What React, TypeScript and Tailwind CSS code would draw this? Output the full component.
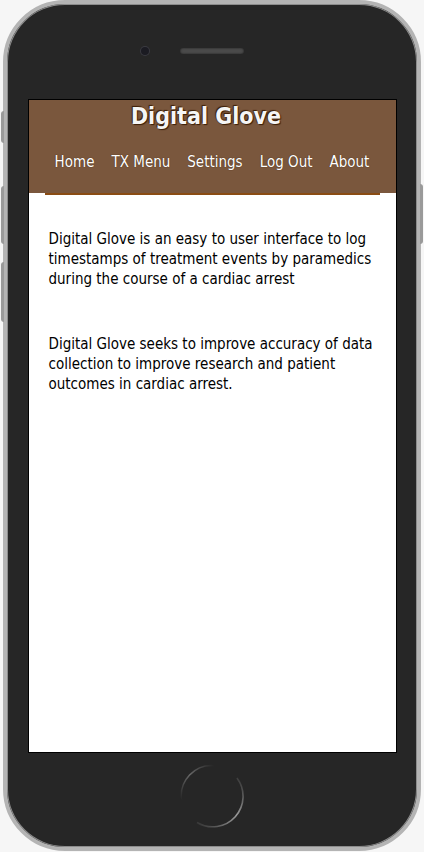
const font = { fontFamily: '"DejaVu Sans Condensed", "DejaVu Sans", Verdana, sans-serif' };

function HomeButton() {
  return (
    <svg width="64" height="64" viewBox="0 0 64 64" className="mt-[11px]">
      <defs>
        <linearGradient id="arcA" x1="0" y1="1" x2="1" y2="0">
          <stop offset="0" stopColor="#262626" />
          <stop offset="0.5" stopColor="#686868" />
          <stop offset="1" stopColor="#262626" />
        </linearGradient>
        <linearGradient id="arcB" x1="1" y1="0" x2="0" y2="1">
          <stop offset="0" stopColor="#303030" />
          <stop offset="0.45" stopColor="#9a9a9a" />
          <stop offset="1" stopColor="#303030" />
        </linearGradient>
      </defs>
      {/* upper-left arc */}
      <path d="M 1.5 36 A 30.5 30.5 0 0 1 34 1.6" fill="none" stroke="url(#arcA)" strokeWidth="1.5" />
      {/* lower-right arc */}
      <path d="M 57 14 A 30.5 30.5 0 0 1 17 58.5" fill="none" stroke="url(#arcB)" strokeWidth="1.6" />
    </svg>
  );
}

export default function App() {
  const links = ['Home', 'TX Menu', 'Settings', 'Log Out', 'About'];

  return (
    <div className="w-[424px] h-[852px] bg-[#f6f6f6] overflow-hidden">
      <div className="relative ml-[3px] h-[851px] w-[418px] rounded-[62px] border-4 border-[#b4b4b4] bg-[#262626] flex flex-col items-center shadow-[inset_0_0_0_1px_#8c8c8c]">
        {/* side buttons */}
        <div className="absolute -left-[6px] top-[107px] h-[32px] w-[3px] rounded-l bg-[#9a9a9a]" />
        <div className="absolute -left-[6px] top-[182px] h-[58px] w-[3px] rounded-l bg-[#9a9a9a]" />
        <div className="absolute -left-[6px] top-[258px] h-[60px] w-[3px] rounded-l bg-[#9a9a9a]" />
        <div className="absolute -right-[6px] top-[180px] h-[60px] w-[3px] rounded-r bg-[#9a9a9a]" />

        {/* earpiece + camera */}
        <div className="h-[95px] w-full flex items-center pl-[134px] pb-[2px]">
          <div className="h-[8px] w-[8px] rounded-full bg-[#1b1b22] shadow-[0_0_0_1px_#3a3a40]" />
          <div className="ml-[31px] h-[6px] w-[64px] rounded-full bg-[#4a4a4a] shadow-[inset_0_0_2px_#1a1a1a]" />
        </div>

        {/* screen */}
        <div className="h-[654px] w-[369px] border border-black bg-white overflow-hidden" style={font}>
          <div className="bg-[#7a573d] pb-[21px]">
            <h1 className="h-[32px] pr-3 text-center text-[23px] leading-[32px] font-bold text-[#f5f5f5] [text-shadow:1px_1px_1px_#3b1d05,-1px_-1px_1px_#3b1d05]">
              Digital Glove
            </h1>
            <nav className="mt-[20px] flex justify-center gap-[17px] text-[15px] leading-[20px] text-white [text-shadow:0_0_1px_#3b1d05]">
              {links.map((l) => (
                <a key={l} href="#" className="whitespace-nowrap">
                  {l}
                </a>
              ))}
            </nav>
          </div>
          <div className="mx-4 h-[2px] bg-[#8a4c14]" />

          <div className="px-5 pt-[34px] text-[15px] leading-[20px] text-black">
            <p>
              Digital Glove is an easy to user interface to log timestamps of treatment events by
              paramedics during the course of a cardiac arrest
            </p>
            <p className="mt-[45px]">
              Digital Glove seeks to improve accuracy of data collection to improve research and
              patient outcomes in cardiac arrest.
            </p>
          </div>
        </div>

        {/* home button */}
        <HomeButton />
      </div>
    </div>
  );
}
